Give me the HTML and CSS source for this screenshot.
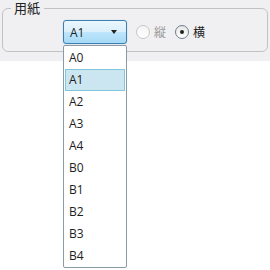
FILE: index.html
```html
<!DOCTYPE html>
<html lang="ja">
<head>
    <meta charset="UTF-8" />
    <title>用紙</title>
    <link rel="stylesheet" href="styles.css">
</head>
<body>
    <div class="panel">
        <fieldset class="group">
            <legend>用紙</legend>
            <div class="row">
                <div class="combo">
                    <span>A1</span>
                    <span class="arrow"></span>
                </div>
                <label class="radio"><span class="dot"></span>縦</label>
                <label class="radio checked"><span class="dot"></span>横</label>
            </div>
        </fieldset>
    </div>

    <ul class="dropdown">
        <li>A0</li>
        <li class="selected">A1</li>
        <li>A2</li>
        <li>A3</li>
        <li>A4</li>
        <li>B0</li>
        <li>B1</li>
        <li>B2</li>
        <li>B3</li>
        <li>B4</li>
    </ul>
</body>
</html>
```

FILE: styles.css
```css
* {
    margin: 0;
    padding: 0;
    box-sizing: border-box;
}
body {
    font-family: "Open Sans", "Noto Sans CJK JP", sans-serif;
    font-size: 12px;
    color: #1e1e1e;
    background-color: white;
    position: relative;
    height: 270px;
}
.panel {
    background-color: #f0f0f2;
    height: 61px;
    padding: 0 2px;
}
.group {
    border: 1px solid #c2c2c4;
    border-radius: 6px;
    height: 52px;
    width: 266px;
    padding: 0;
}
.group legend {
    margin-left: 8px;
    padding: 0 4px 0 3px;
    font-size: 13px;
    line-height: 16px;
    color: #222;
}
.row {
    display: flex;
    align-items: center;
    padding-left: 60px;
    margin-top: 4px;
}
.combo {
    width: 64px;
    height: 24px;
    border: 1px solid #3c7fb1;
    border-radius: 3px;
    background: linear-gradient(#eaf6fd, #d9f0fc 50%, #bee6fd 50%, #a7d9f5);
    display: flex;
    align-items: center;
    justify-content: space-between;
    padding: 0 9px 0 6px;
    box-shadow: 0 0 1px #7fb8de;
}
.arrow {
    width: 0;
    height: 0;
    border-left: 3.5px solid transparent;
    border-right: 3.5px solid transparent;
    border-top: 4px solid #222;
}
.radio {
    display: flex;
    align-items: center;
    gap: 4px;
    margin-left: 9px;
    color: #9a9a9a;
}
.radio.checked {
    color: #1e1e1e;
}
.dot {
    width: 14px;
    height: 14px;
    border-radius: 50%;
    border: 1px solid #c8c8c8;
    background: linear-gradient(#f4f4f4, #ffffff);
    display: flex;
    align-items: center;
    justify-content: center;
}
.radio.checked .dot {
    border-color: #6d7d8c;
    background: linear-gradient(#e6e6e6, #ffffff);
}
.radio.checked .dot::after {
    content: "";
    width: 4px;
    height: 4px;
    border-radius: 50%;
    background-color: #222;
}
.dropdown {
    position: absolute;
    left: 63px;
    top: 45px;
    width: 64px;
    height: 223px;
    list-style: none;
    background-color: white;
    border: 1px solid #8d9aa6;
    border-radius: 2px;
    padding: 1px 0;
}
.dropdown li {
    height: 22px;
    line-height: 22px;
    padding-left: 4px;
    margin: 0 1px;
}
.dropdown li.selected {
    background-color: #cbe6f1;
    border: 1px solid #7ec7df;
    line-height: 20px;
    padding-left: 3px;
}
```
